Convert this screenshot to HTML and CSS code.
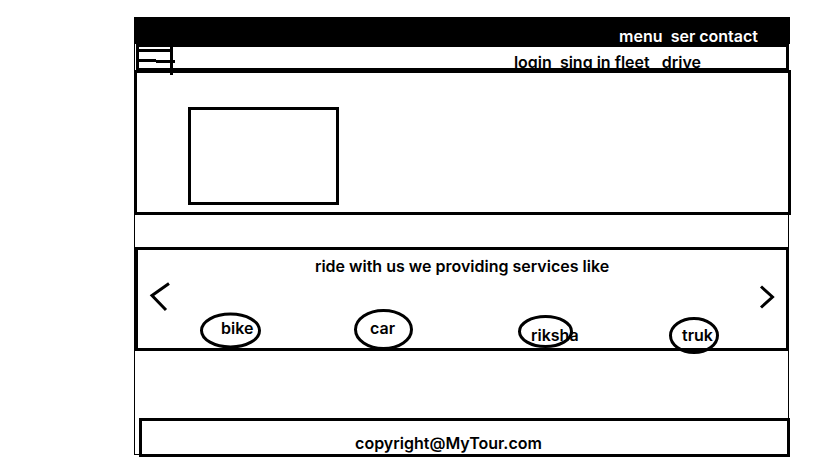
FILE: index.html
```html
<!DOCTYPE html>
<html lang="en">
<head>
<meta charset="utf-8">
<title>MyTour</title>
<link rel="stylesheet" href="styles.css">
</head>
<body>
<div class="page">
  <header>
    <nav class="topbar" aria-label="Site"><a href="#">menu</a>&nbsp; <a href="#">ser</a> <a href="#">contact</a></nav>
    <nav class="subbar" aria-label="Account">
      <button class="burger" type="button" aria-label="Open menu">
        <svg width="39" height="28" viewBox="0 0 39 28" shape-rendering="crispEdges"><path d="M0 2h32v3H0zM31 0h3v28h-3zM0 12h17v3H0zM17 13h19v3H17z"/></svg>
      </button>
      <div class="links"><a href="#">login</a>&nbsp; <a href="#">sing in</a> <a href="#">fleet</a>&nbsp;&nbsp; <a href="#">drive</a></div>
    </nav>
  </header>
  <main>
    <section class="hero"><div class="hero-card"></div></section>
    <section class="services">
      <h1>ride with us we providing services like</h1>
      <div class="carousel">
        <button class="arrow" type="button" aria-label="Previous">
          <svg width="20" height="30" viewBox="0 0 20 30"><path d="M19 1.500L2 13.500L16 28"/></svg>
        </button>
        <ul class="rides">
          <li><a class="indent-l" href="#"><svg width="61" height="45" viewBox="0 0 61 45"><ellipse cx="30.500" cy="21.500" rx="29" ry="16.500"/></svg><span>bike</span></a></li>
          <li><a class="indent-m" href="#"><svg width="61" height="45" viewBox="0 0 61 45"><ellipse cx="29.500" cy="20.500" rx="28" ry="19"/></svg><span>car</span></a></li>
          <li><a class="low" href="#"><svg width="61" height="45" viewBox="0 0 61 45"><ellipse cx="27.500" cy="22.500" rx="26" ry="15"/></svg><span>riksha</span></a></li>
          <li><a class="low" href="#"><svg width="61" height="45" viewBox="0 0 61 45"><ellipse cx="25" cy="26.500" rx="23.500" ry="17"/></svg><span>truk</span></a></li>
        </ul>
        <button class="arrow" type="button" aria-label="Next">
          <svg width="14" height="30" viewBox="0 0 14 30"><path d="M1 4.500L12.500 15L1 25.500"/></svg>
        </button>
      </div>
    </section>
  </main>
  <footer>copyright@MyTour.com</footer>
</div>
</body>
</html>
```

FILE: styles.css
```css
* {
  box-sizing: border-box;
}

body {
  margin: 0;
  padding: 17px 30px 2px 134px;
  background: #fff;
  color: #000;
  font: 600 16px/20px Inter, "Liberation Sans", Arial, sans-serif;
}

a {
  color: inherit;
  text-decoration: none;
}

button {
  display: block;
  padding: 0;
  border: 0;
  background: none;
  cursor: pointer;
}

svg {
  display: block;
  overflow: visible;
}

.page {
  border: 1px solid #000;
}

.topbar {
  margin: -1px -2px 0 -1px;
  padding: 9px 32px 0 0;
  height: 27px;
  background: #000;
  color: #fff;
  text-align: right;
}

.subbar {
  display: flex;
  justify-content: space-between;
  height: 27px;
  margin: 0 -1px 0 1px;
  padding-right: 85px;
  border: 3px solid #000;
}

.burger {
  height: 21px;
}

.links {
  padding-top: 5px;
}

.hero {
  margin: -1px -3px 0 -1px;
  padding: 34px 51px 7px;
  border: 3px solid #000;
}

.hero-card {
  width: 151px;
  height: 98px;
  border: 3px solid #000;
}

.services {
  margin: 32px -1px 0 0;
  border: 3px solid #000;
}

h1 {
  margin: 0;
  font: inherit;
  line-height: 32px;
  text-align: center;
}

.carousel {
  display: flex;
  align-items: flex-start;
  padding: 0 12px;
}

.arrow path,
.rides ellipse {
  fill: none;
  stroke: #000;
  stroke-width: 3px;
}

.rides {
  flex: 1;
  display: grid;
  grid-template-columns: 154fr 164fr 151fr 91fr;
  margin: 0 0 -6px;
  padding: 27px 0 0 30px;
  list-style: none;
}

.rides a {
  display: grid;
  justify-content: start;
}

.rides svg,
.rides span {
  grid-area: 1 / 1;
}

.rides span {
  padding: 9px 0 0 13px;
}

.rides .indent-l span {
  padding-left: 21px;
}

.rides .indent-m span {
  padding-left: 16px;
}

.rides .low span {
  padding-top: 16px;
}

footer {
  margin: 67px -2px -4px 4px;
  padding: 12px 32px 1px 0;
  border: 3px solid #000;
  border-bottom-width: 4px;
  text-align: center;
}
```
